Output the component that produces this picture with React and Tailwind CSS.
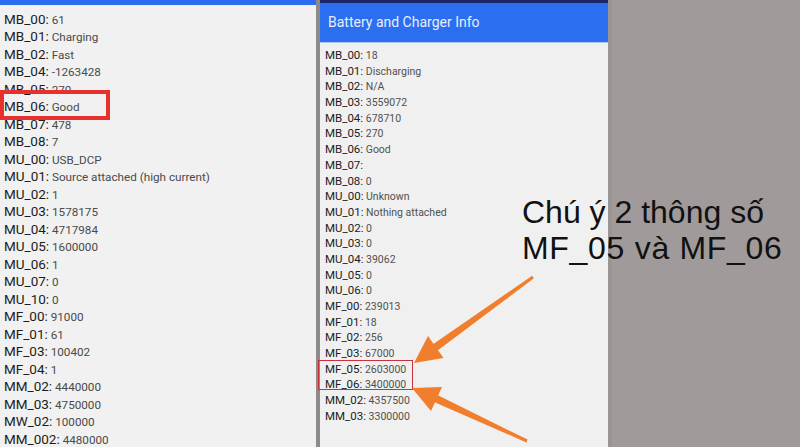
const leftRows = [
  ['MB_00', '61'],
  ['MB_01', 'Charging'],
  ['MB_02', 'Fast'],
  ['MB_04', '-1263428'],
  ['MB_05', '270'],
  ['MB_06', 'Good'],
  ['MB_07', '478'],
  ['MB_08', '7'],
  ['MU_00', 'USB_DCP'],
  ['MU_01', 'Source attached (high current)'],
  ['MU_02', '1'],
  ['MU_03', '1578175'],
  ['MU_04', '4717984'],
  ['MU_05', '1600000'],
  ['MU_06', '1'],
  ['MU_07', '0'],
  ['MU_10', '0'],
  ['MF_00', '91000'],
  ['MF_01', '61'],
  ['MF_03', '100402'],
  ['MF_04', '1'],
  ['MM_02', '4440000'],
  ['MM_03', '4750000'],
  ['MW_02', '100000'],
  ['MM_002', '4480000'],
];

const rightRows = [
  ['MB_00', '18'],
  ['MB_01', 'Discharging'],
  ['MB_02', 'N/A'],
  ['MB_03', '3559072'],
  ['MB_04', '678710'],
  ['MB_05', '270'],
  ['MB_06', 'Good'],
  ['MB_07', ''],
  ['MB_08', '0'],
  ['MU_00', 'Unknown'],
  ['MU_01', 'Nothing attached'],
  ['MU_02', '0'],
  ['MU_03', '0'],
  ['MU_04', '39062'],
  ['MU_05', '0'],
  ['MU_06', '0'],
  ['MF_00', '239013'],
  ['MF_01', '18'],
  ['MF_02', '256'],
  ['MF_03', '67000'],
  ['MF_05', '2603000'],
  ['MF_06', '3400000'],
  ['MM_02', '4357500'],
  ['MM_03', '3300000'],
];

export default function App() {
  return (
    <div className="relative w-[800px] h-[447px] overflow-hidden bg-[#a09a9a] flex font-['Roboto',sans-serif]">
      {/* màn hình bên trái */}
      <div className="w-[316px] h-full flex flex-col bg-[#f1f1f1]">
        <div className="h-[6px] bg-[#2b6cf0]"></div>
        <div className="flex flex-col pt-[5px] pl-[4px]">
          {leftRows.map(([k, v]) => (
            <div key={k} className="h-[17.5px] leading-[17.5px] whitespace-nowrap">
              <span className="text-[13.5px] text-[#1c1c1c]">{k}:</span>
              <span className="text-[11.7px] text-[#4a4a4a]"> {v}</span>
            </div>
          ))}
        </div>
      </div>

      <div className="w-[4px] h-full bg-[#8e8a8a]"></div>

      {/* màn hình bên phải */}
      <div className="w-[288px] h-full flex flex-col bg-[#f0f0f0]">
        <div className="h-[3px] bg-[#1b2766]"></div>
        <div className="h-[39px] bg-[#2b6ff0] flex items-center pl-[8px]">
          <span className="text-[14px] text-[#e6eeff]">Battery and Charger Info</span>
        </div>
        <div className="h-[1px] bg-[#a9c6f5]"></div>
        <div className="flex flex-col pt-[3px] pl-[5px]">
          {rightRows.map(([k, v]) => (
            <div key={k} className="h-[15.7px] leading-[15.7px] whitespace-nowrap">
              <span className="text-[11.5px] text-[#1c1c1c]">{k}:</span>
              <span className="text-[10.5px] text-[#505050]"> {v}</span>
            </div>
          ))}
        </div>
      </div>

      <div className="w-[4px] h-full bg-[#9a9494]"></div>

      {/* khung đỏ đánh dấu */}
      <div className="absolute left-0 top-[90px] w-[110px] h-[30px] border-[4px] border-[#e8302f]"></div>
      <div className="absolute left-[318px] top-[360px] w-[95px] h-[30px] border-[1.5px] border-[#c8323c]"></div>

      {/* chú thích */}
      <div className="absolute left-[522px] top-[194px] font-['Liberation_Sans',Arial,sans-serif] text-[32px] leading-[36px] text-[#111111] whitespace-nowrap">
        <div>Chú ý 2 thông số</div>
        <div className="tracking-[0.7px]">MF_05 và MF_06</div>
      </div>

      {/* mũi tên */}
      <svg className="absolute inset-0 pointer-events-none" width="800" height="447" viewBox="0 0 800 447">
        <g fill="#f07e2c">
          <polygon points="533.9,278.2 532.1,275.8 433.0,344.2 437.6,350.6" />
          <polygon points="414,363 443.5,358 428,336" />
          <polygon points="527.6,439.6 526.4,442.4 434.0,402.1 437.4,394.9" />
          <polygon points="412,388 442,387 431,411" />
        </g>
      </svg>
    </div>
  );
}
